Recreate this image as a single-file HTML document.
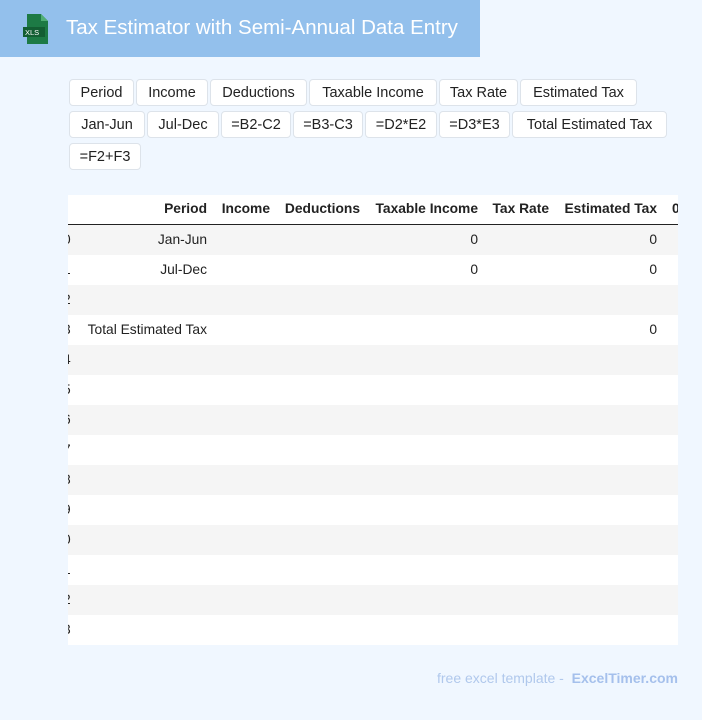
<!DOCTYPE html>
<html><head><style>
body{margin:0;width:702px;height:720px;background:#f0f7ff;font-family:"Liberation Sans",sans-serif;position:relative;overflow:hidden}
.bar{position:absolute;left:0;top:0;width:480px;height:57px;background:#93c0ec}
.bar .t{position:absolute;left:66px;top:16px;color:#fff;font-size:20.5px}
.btn{position:absolute;height:27px;border:1px solid #dde3ea;border-radius:4px;background:#fff;font-size:14.5px;line-height:27px;text-align:center;color:#222;box-sizing:border-box}
.tbl{position:absolute;left:68px;top:195px;width:610px;height:450px;overflow:hidden;background:#fff;font-size:13.8px;color:#222}
.row{position:absolute;left:0;width:610px;height:30px}
.c{position:absolute;top:0;line-height:30px;white-space:nowrap}
.h .c{font-weight:bold;line-height:28px}
</style></head><body>
<div class="bar">
<svg style="position:absolute;left:22px;top:14px" width="28" height="30" viewBox="0 0 28 30"><path d="M5 0h14l7 7v23H5z" fill="#1d7a45"/><path d="M19 0v7h7z" fill="#4fae74"/><rect x="1" y="13" width="22" height="10" fill="#135e33"/><text x="3" y="21" font-size="7.5" fill="#fff" font-family="Liberation Sans">XLS</text></svg>
<div class="t">Tax Estimator with Semi-Annual Data Entry</div></div>
<div class="btn" style="left:69px;top:79px;width:65px">Period</div>
<div class="btn" style="left:136px;top:79px;width:72px">Income</div>
<div class="btn" style="left:210px;top:79px;width:97px">Deductions</div>
<div class="btn" style="left:309px;top:79px;width:128px">Taxable Income</div>
<div class="btn" style="left:439px;top:79px;width:79px">Tax Rate</div>
<div class="btn" style="left:520px;top:79px;width:117px">Estimated Tax</div>
<div class="btn" style="left:69px;top:111px;width:76px">Jan-Jun</div>
<div class="btn" style="left:147px;top:111px;width:72px">Jul-Dec</div>
<div class="btn" style="left:221px;top:111px;width:70px">=B2-C2</div>
<div class="btn" style="left:293px;top:111px;width:70px">=B3-C3</div>
<div class="btn" style="left:365px;top:111px;width:72px">=D2*E2</div>
<div class="btn" style="left:439px;top:111px;width:71px">=D3*E3</div>
<div class="btn" style="left:512px;top:111px;width:155px">Total Estimated Tax</div>
<div class="btn" style="left:69px;top:143px;width:72px">=F2+F3</div>
<div class="tbl">
<div class="row h" style="top:0;border-bottom:1px solid #222;height:29px">
<div class="c" style="right:471px">Period</div><div class="c" style="right:408px">Income</div><div class="c" style="right:318px">Deductions</div><div class="c" style="right:200px">Taxable Income</div><div class="c" style="right:129px">Tax Rate</div><div class="c" style="right:21px">Estimated Tax</div><div class="c" style="left:604px">0</div></div>
<div class="row" style="top:30px;background:#f5f5f5"><div class="c" style="left:-5px">0</div><div class="c" style="right:471px">Jan-Jun</div><div class="c" style="right:200px">0</div><div class="c" style="right:21px">0</div></div>
<div class="row" style="top:60px"><div class="c" style="left:-5px">1</div><div class="c" style="right:471px">Jul-Dec</div><div class="c" style="right:200px">0</div><div class="c" style="right:21px">0</div></div>
<div class="row" style="top:90px;background:#f5f5f5"><div class="c" style="left:-5px">2</div></div>
<div class="row" style="top:120px"><div class="c" style="left:-5px">3</div><div class="c" style="right:471px">Total Estimated Tax</div><div class="c" style="right:21px">0</div></div>
<div class="row" style="top:150px;background:#f5f5f5"><div class="c" style="left:-5px">4</div></div>
<div class="row" style="top:180px"><div class="c" style="left:-5px">5</div></div>
<div class="row" style="top:210px;background:#f5f5f5"><div class="c" style="left:-5px">6</div></div>
<div class="row" style="top:240px"><div class="c" style="left:-5px">7</div></div>
<div class="row" style="top:270px;background:#f5f5f5"><div class="c" style="left:-5px">8</div></div>
<div class="row" style="top:300px"><div class="c" style="left:-5px">9</div></div>
<div class="row" style="top:330px;background:#f5f5f5"><div class="c" style="left:-5px">0</div></div>
<div class="row" style="top:360px"><div class="c" style="left:-5px">1</div></div>
<div class="row" style="top:390px;background:#f5f5f5"><div class="c" style="left:-5px">2</div></div>
<div class="row" style="top:420px"><div class="c" style="left:-5px">3</div></div>
</div>
<div style="position:absolute;left:437px;top:670px;font-size:14px;color:#b0c8ec">free excel template - &nbsp;<b style="color:#a5c0ec">ExcelTimer.com</b></div>
</body></html>
